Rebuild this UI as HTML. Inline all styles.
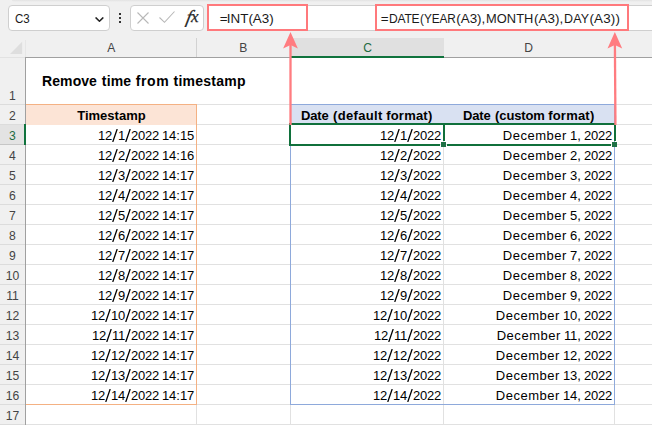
<!DOCTYPE html><html><head><meta charset="utf-8"><title>Excel</title><style>
html,body{margin:0;padding:0;}
body{width:652px;height:425px;position:relative;overflow:hidden;background:#fff;font-family:"Liberation Sans",sans-serif;color:#000;}
.abs{position:absolute;}
.top{left:0;top:0;width:652px;height:58px;background:#f0f0f0;}
.shade{left:12px;top:0;width:640px;height:2px;background:linear-gradient(#e2e2e2,#f0f0f0);border-bottom-left-radius:3px;}
.box{background:#fff;border:1px solid #cfcfcf;border-radius:4px;box-sizing:border-box;}
.fbar{left:207px;top:5px;width:460px;height:26px;background:#fff;border:1px solid #cfcfcf;border-radius:4px 0 0 4px;box-sizing:border-box;}
.red{border:2px solid #ff797c;box-sizing:border-box;background:#fff;}
.ftxt{font-size:13px;line-height:16px;top:10px;white-space:nowrap;color:#1a1a1a;}
.colh{top:38px;height:19px;font-size:13px;line-height:19px;text-align:center;color:#444;}
.colh span{display:inline-block;transform:scaleX(0.93);}
.rowh{left:0;width:25px;transform:scaleX(0.9);font-size:13.5px;text-align:center;color:#444;height:19px;line-height:21px;}
.hl{background:#fff;}
.vl{background:#fff;}
.g{background:#e1e1e1;}
.cell{font-size:13px;white-space:nowrap;height:19px;line-height:19px;}
.r{text-align:right;}
.dg{letter-spacing:-0.23px;}
.sl{display:inline-block;width:6px;height:13px;vertical-align:-2.2px;}
.cl{display:inline-block;width:4px;text-align:center;}
.cm{display:inline-block;width:4px;text-align:center;}
.sp{display:inline-block;width:3px;}
.mw{letter-spacing:0.54px;}
.c{text-align:center;}
.b{font-weight:bold;}
</style></head><body>
<div class="abs top"></div>
<div class="abs shade"></div>
<div class="abs box" style="left:8px;top:5px;width:102px;height:26px;"></div>
<div class="abs" style="left:15.1px;top:10.5px;transform:scaleX(0.92);transform-origin:0 0;font-size:12.5px;line-height:16px;color:#1a1a1a;">C3</div>
<svg class="abs" style="left:94px;top:15px;" width="12" height="9" viewBox="0 0 12 9"><path d="M2.0 2.9 L5.45 6.2 L8.9 2.9" fill="none" stroke="#222" stroke-width="1.5" stroke-linecap="round" stroke-linejoin="round"/></svg>
<div class="abs" style="left:119px;top:13px;width:2px;height:2px;background:#333;"></div>
<div class="abs" style="left:119px;top:17px;width:2px;height:2px;background:#333;"></div>
<div class="abs" style="left:119px;top:21px;width:2px;height:2px;background:#333;"></div>
<div class="abs box" style="left:130px;top:5px;width:74px;height:26px;"></div>
<svg class="abs" style="left:136px;top:11px;" width="14" height="14" viewBox="0 0 14 14"><path d="M1.5 1.5 L12.5 12.5 M12.5 1.5 L1.5 12.5" fill="none" stroke="#b8b8b8" stroke-width="1.1"/></svg>
<svg class="abs" style="left:158px;top:10.4px;" width="18" height="14" viewBox="0 0 18 14"><path d="M1.5 7.5 L6.5 12.3 L16.5 1.5" fill="none" stroke="#b8b8b8" stroke-width="1.1"/></svg>
<div class="abs" style="left:185.6px;top:7px;font-family:'Liberation Serif',serif;font-style:italic;font-size:18.5px;line-height:20px;color:#262626;-webkit-text-stroke:0.25px #262626;transform:skewX(-12deg);transform-origin:50% 60%;">f</div>
<div class="abs" style="left:190.9px;top:7px;font-family:'Liberation Serif',serif;font-style:italic;font-size:17px;line-height:20px;color:#262626;-webkit-text-stroke:0.25px #262626;">x</div>
<div class="abs fbar"></div>
<div class="abs red" style="left:207px;top:4px;width:101px;height:27px;"></div>
<div class="abs red" style="left:375px;top:4px;width:254px;height:27px;"></div>
<div class="abs" style="left:219.78px;top:11px;font:13.4px 'Liberation Sans';line-height:16px;letter-spacing:-0.05px;white-space:nowrap;color:#1a1a1a;">=</div>
<div class="abs" style="left:226.77px;top:11px;font:13.4px 'Liberation Sans';line-height:16px;letter-spacing:0.05px;white-space:nowrap;color:#1a1a1a;">INT</div>
<div class="abs" style="left:248.42px;top:11px;font:13.4px 'Liberation Sans';line-height:16px;letter-spacing:-0.02px;white-space:nowrap;color:#1a1a1a;">(A3)</div>
<div class="abs" style="left:380.78px;top:11px;font:13.4px 'Liberation Sans';line-height:16px;letter-spacing:-0.45px;white-space:nowrap;color:#1a1a1a;">=</div>
<div class="abs" style="left:388.72px;top:11px;font:13.4px 'Liberation Sans';line-height:16px;letter-spacing:-0.23px;white-space:nowrap;color:#1a1a1a;transform:scaleX(0.9);transform-origin:0 0;">DATE</div>
<div class="abs" style="left:420.17px;top:11px;font:13.4px 'Liberation Sans';line-height:16px;letter-spacing:-0.05px;white-space:nowrap;color:#1a1a1a;transform:scaleX(0.88);transform-origin:0 0;">(YEAR</div>
<div class="abs" style="left:456.25px;top:11px;font:13.4px 'Liberation Sans';line-height:16px;letter-spacing:0.00px;white-space:nowrap;color:#1a1a1a;">(A3),</div>
<div class="abs" style="left:485.66px;top:11px;font:13.4px 'Liberation Sans';line-height:16px;letter-spacing:0.07px;white-space:nowrap;color:#1a1a1a;transform:scaleX(0.96);transform-origin:0 0;">MONTH</div>
<div class="abs" style="left:533.95px;top:11px;font:13.4px 'Liberation Sans';line-height:16px;letter-spacing:0.08px;white-space:nowrap;color:#1a1a1a;">(A3),</div>
<div class="abs" style="left:564.05px;top:11px;font:13.4px 'Liberation Sans';line-height:16px;letter-spacing:0.22px;white-space:nowrap;color:#1a1a1a;transform:scaleX(0.93);transform-origin:0 0;">DAY</div>
<div class="abs" style="left:589.45px;top:11px;font:13.4px 'Liberation Sans';line-height:16px;letter-spacing:0.19px;white-space:nowrap;color:#1a1a1a;">(A3))</div>
<div class="abs colh" style="left:26px;width:170px;"><span>A</span></div>
<div class="abs colh" style="left:197px;width:93px;"><span>B</span></div>
<div class="abs colh" style="left:291px;width:153px;background:#e0e0e0;color:#1e6b41;"><span>C</span></div>
<div class="abs colh" style="left:444px;width:170px;"><span>D</span></div>
<div class="abs colh" style="left:615px;width:45px;"><span></span></div>
<div class="abs" style="left:196px;top:38px;width:1px;height:19px;background:#d2d2d2;"></div>
<div class="abs" style="left:290px;top:38px;width:1px;height:19px;background:#d2d2d2;"></div>
<div class="abs" style="left:0;top:57px;width:25px;height:1px;background:#e2e2e2;"></div>
<div class="abs" style="left:25px;top:57px;width:627px;height:1px;background:#a0a0a0;"></div>
<div class="abs" style="left:291px;top:56px;width:153px;height:2px;background:#10733d;"></div>
<svg class="abs" style="left:9px;top:41px;" width="14" height="14" viewBox="0 0 14 14"><path d="M13.2 0.8 L13.2 13 L1 13 Z" fill="#dedede"/></svg>
<div class="abs" style="left:0;top:58px;width:25px;height:367px;background:#f0f0f0;"></div>
<div class="abs" style="left:25px;top:40px;width:1px;height:17px;background:#e6e6e6;"></div>
<div class="abs" style="left:25px;top:57px;width:1px;height:368px;background:#a0a0a0;"></div>
<div class="abs" style="left:0;top:124px;width:25px;height:20px;background:#e3e3e3;"></div>
<div class="abs" style="left:0;top:144px;width:25px;height:1px;background:#c6c6c6;z-index:2;"></div>
<div class="abs" style="left:24px;top:124px;width:2px;height:21px;background:#10733d;z-index:3;"></div>
<div class="abs rowh" style="top:84.8px;">1</div>
<div class="abs rowh" style="top:105px;">2</div>
<div class="abs rowh" style="top:125px;color:#1e6b41;">3</div>
<div class="abs rowh" style="top:145px;">4</div>
<div class="abs rowh" style="top:165px;">5</div>
<div class="abs rowh" style="top:185px;">6</div>
<div class="abs rowh" style="top:205px;">7</div>
<div class="abs rowh" style="top:225px;">8</div>
<div class="abs rowh" style="top:245px;">9</div>
<div class="abs rowh" style="top:265px;">10</div>
<div class="abs rowh" style="top:285px;">11</div>
<div class="abs rowh" style="top:305px;">12</div>
<div class="abs rowh" style="top:325px;">13</div>
<div class="abs rowh" style="top:345px;">14</div>
<div class="abs rowh" style="top:365px;">15</div>
<div class="abs rowh" style="top:385px;">16</div>
<div class="abs rowh" style="top:405px;">17</div>
<div class="abs" style="left:0;top:104px;width:25px;height:1px;background:#dcdcdc;"></div>
<div class="abs" style="left:0;top:124px;width:25px;height:1px;background:#dcdcdc;"></div>
<div class="abs" style="left:0;top:144px;width:25px;height:1px;background:#dcdcdc;"></div>
<div class="abs" style="left:0;top:164px;width:25px;height:1px;background:#dcdcdc;"></div>
<div class="abs" style="left:0;top:184px;width:25px;height:1px;background:#dcdcdc;"></div>
<div class="abs" style="left:0;top:204px;width:25px;height:1px;background:#dcdcdc;"></div>
<div class="abs" style="left:0;top:224px;width:25px;height:1px;background:#dcdcdc;"></div>
<div class="abs" style="left:0;top:244px;width:25px;height:1px;background:#dcdcdc;"></div>
<div class="abs" style="left:0;top:264px;width:25px;height:1px;background:#dcdcdc;"></div>
<div class="abs" style="left:0;top:284px;width:25px;height:1px;background:#dcdcdc;"></div>
<div class="abs" style="left:0;top:304px;width:25px;height:1px;background:#dcdcdc;"></div>
<div class="abs" style="left:0;top:324px;width:25px;height:1px;background:#dcdcdc;"></div>
<div class="abs" style="left:0;top:344px;width:25px;height:1px;background:#dcdcdc;"></div>
<div class="abs" style="left:0;top:364px;width:25px;height:1px;background:#dcdcdc;"></div>
<div class="abs" style="left:0;top:384px;width:25px;height:1px;background:#dcdcdc;"></div>
<div class="abs" style="left:0;top:404px;width:25px;height:1px;background:#dcdcdc;"></div>
<div class="abs" style="left:0;top:424px;width:25px;height:1px;background:#dcdcdc;"></div>
<div class="abs g" style="left:26px;top:104px;width:626px;height:1px;"></div>
<div class="abs g" style="left:26px;top:124px;width:626px;height:1px;"></div>
<div class="abs g" style="left:26px;top:144px;width:626px;height:1px;"></div>
<div class="abs g" style="left:26px;top:164px;width:626px;height:1px;"></div>
<div class="abs g" style="left:26px;top:184px;width:626px;height:1px;"></div>
<div class="abs g" style="left:26px;top:204px;width:626px;height:1px;"></div>
<div class="abs g" style="left:26px;top:224px;width:626px;height:1px;"></div>
<div class="abs g" style="left:26px;top:244px;width:626px;height:1px;"></div>
<div class="abs g" style="left:26px;top:264px;width:626px;height:1px;"></div>
<div class="abs g" style="left:26px;top:284px;width:626px;height:1px;"></div>
<div class="abs g" style="left:26px;top:304px;width:626px;height:1px;"></div>
<div class="abs g" style="left:26px;top:324px;width:626px;height:1px;"></div>
<div class="abs g" style="left:26px;top:344px;width:626px;height:1px;"></div>
<div class="abs g" style="left:26px;top:364px;width:626px;height:1px;"></div>
<div class="abs g" style="left:26px;top:384px;width:626px;height:1px;"></div>
<div class="abs g" style="left:26px;top:404px;width:626px;height:1px;"></div>
<div class="abs g" style="left:26px;top:424px;width:626px;height:1px;"></div>
<div class="abs g" style="left:196px;top:105px;width:1px;height:320px;"></div>
<div class="abs g" style="left:290px;top:105px;width:1px;height:320px;"></div>
<div class="abs g" style="left:443px;top:105px;width:1px;height:320px;"></div>
<div class="abs g" style="left:614px;top:105px;width:1px;height:320px;"></div>
<div class="abs" style="left:42.08px;top:73px;font:bold 14px 'Liberation Sans';line-height:16px;letter-spacing:0.07px;white-space:nowrap;color:#000;">Remove</div>
<div class="abs" style="left:101.78px;top:73px;font:bold 14px 'Liberation Sans';line-height:16px;letter-spacing:0.20px;white-space:nowrap;color:#000;">time</div>
<div class="abs" style="left:135.82px;top:73px;font:bold 14px 'Liberation Sans';line-height:16px;letter-spacing:0.57px;white-space:nowrap;color:#000;">from</div>
<div class="abs" style="left:173.48px;top:73px;font:bold 14px 'Liberation Sans';line-height:16px;letter-spacing:0.26px;white-space:nowrap;color:#000;">timestamp</div>
<div class="abs" style="left:26px;top:105px;width:170px;height:20px;background:#fce4d6;"></div>
<div class="abs" style="left:26px;top:104px;width:171px;height:1px;background:#f4b183;"></div>
<div class="abs" style="left:196px;top:104px;width:1px;height:301px;background:#f4b183;"></div>
<div class="abs" style="left:26px;top:404px;width:171px;height:1px;background:#f4b183;"></div>
<div class="abs" style="left:291px;top:105px;width:323px;height:19px;background:#d9e1f2;"></div>
<div class="abs" style="left:290px;top:104px;width:325px;height:1px;background:#8ea9db;"></div>
<div class="abs" style="left:290px;top:104px;width:1px;height:301px;background:#8ea9db;"></div>
<div class="abs" style="left:614px;top:104px;width:1px;height:301px;background:#8ea9db;"></div>
<div class="abs" style="left:290px;top:404px;width:325px;height:1px;background:#8ea9db;"></div>
<div class="abs" style="left:77.20px;top:106px;font:bold 13px 'Liberation Sans';line-height:19px;letter-spacing:0.01px;white-space:nowrap;color:#000;">Timestamp</div>
<div class="abs" style="left:300.88px;top:106px;font:bold 13px 'Liberation Sans';line-height:19px;letter-spacing:-0.07px;white-space:nowrap;color:#000;">Date</div>
<div class="abs" style="left:333.10px;top:106px;font:bold 13px 'Liberation Sans';line-height:19px;letter-spacing:0.32px;white-space:nowrap;color:#000;">(default</div>
<div class="abs" style="left:386.17px;top:106px;font:bold 13px 'Liberation Sans';line-height:19px;letter-spacing:0.22px;white-space:nowrap;color:#000;">format)</div>
<div class="abs" style="left:462.88px;top:106px;font:bold 13px 'Liberation Sans';line-height:19px;letter-spacing:-0.07px;white-space:nowrap;color:#000;">Date</div>
<div class="abs" style="left:495.10px;top:106px;font:bold 13px 'Liberation Sans';line-height:19px;letter-spacing:-0.12px;white-space:nowrap;color:#000;">(custom</div>
<div class="abs" style="left:548.17px;top:106px;font:bold 13px 'Liberation Sans';line-height:19px;letter-spacing:0.22px;white-space:nowrap;color:#000;">format)</div>
<div class="abs cell r ts" style="left:26px;width:168px;top:126px;"><span class="dg">12</span><svg class="sl" width="6" height="13" viewBox="0 0 6 13"><path d="M0.75 12.95 L5.2 0.05" stroke="#000" stroke-width="1.3" fill="none"/></svg><span class="dg">1</span><svg class="sl" width="6" height="13" viewBox="0 0 6 13"><path d="M0.75 12.95 L5.2 0.05" stroke="#000" stroke-width="1.3" fill="none"/></svg><span class="dg">2022</span><span class="sp"></span><span class="dg">14</span><span class="cl">:</span><span class="dg">15</span></div>
<div class="abs cell r dd" style="left:291px;width:150px;top:126px;"><span class="dg">12</span><svg class="sl" width="6" height="13" viewBox="0 0 6 13"><path d="M0.75 12.95 L5.2 0.05" stroke="#000" stroke-width="1.3" fill="none"/></svg><span class="dg">1</span><svg class="sl" width="6" height="13" viewBox="0 0 6 13"><path d="M0.75 12.95 L5.2 0.05" stroke="#000" stroke-width="1.3" fill="none"/></svg><span class="dg">2022</span></div>
<div class="abs cell r dc" style="left:444px;width:168px;top:126px;"><span class="mw">December</span><span class="sp"></span><span class="dg">1</span><span class="cm">,</span><span class="sp"></span><span class="dg">2022</span></div>
<div class="abs cell r ts" style="left:26px;width:168px;top:146px;"><span class="dg">12</span><svg class="sl" width="6" height="13" viewBox="0 0 6 13"><path d="M0.75 12.95 L5.2 0.05" stroke="#000" stroke-width="1.3" fill="none"/></svg><span class="dg">2</span><svg class="sl" width="6" height="13" viewBox="0 0 6 13"><path d="M0.75 12.95 L5.2 0.05" stroke="#000" stroke-width="1.3" fill="none"/></svg><span class="dg">2022</span><span class="sp"></span><span class="dg">14</span><span class="cl">:</span><span class="dg">16</span></div>
<div class="abs cell r dd" style="left:291px;width:150px;top:146px;"><span class="dg">12</span><svg class="sl" width="6" height="13" viewBox="0 0 6 13"><path d="M0.75 12.95 L5.2 0.05" stroke="#000" stroke-width="1.3" fill="none"/></svg><span class="dg">2</span><svg class="sl" width="6" height="13" viewBox="0 0 6 13"><path d="M0.75 12.95 L5.2 0.05" stroke="#000" stroke-width="1.3" fill="none"/></svg><span class="dg">2022</span></div>
<div class="abs cell r dc" style="left:444px;width:168px;top:146px;"><span class="mw">December</span><span class="sp"></span><span class="dg">2</span><span class="cm">,</span><span class="sp"></span><span class="dg">2022</span></div>
<div class="abs cell r ts" style="left:26px;width:168px;top:166px;"><span class="dg">12</span><svg class="sl" width="6" height="13" viewBox="0 0 6 13"><path d="M0.75 12.95 L5.2 0.05" stroke="#000" stroke-width="1.3" fill="none"/></svg><span class="dg">3</span><svg class="sl" width="6" height="13" viewBox="0 0 6 13"><path d="M0.75 12.95 L5.2 0.05" stroke="#000" stroke-width="1.3" fill="none"/></svg><span class="dg">2022</span><span class="sp"></span><span class="dg">14</span><span class="cl">:</span><span class="dg">17</span></div>
<div class="abs cell r dd" style="left:291px;width:150px;top:166px;"><span class="dg">12</span><svg class="sl" width="6" height="13" viewBox="0 0 6 13"><path d="M0.75 12.95 L5.2 0.05" stroke="#000" stroke-width="1.3" fill="none"/></svg><span class="dg">3</span><svg class="sl" width="6" height="13" viewBox="0 0 6 13"><path d="M0.75 12.95 L5.2 0.05" stroke="#000" stroke-width="1.3" fill="none"/></svg><span class="dg">2022</span></div>
<div class="abs cell r dc" style="left:444px;width:168px;top:166px;"><span class="mw">December</span><span class="sp"></span><span class="dg">3</span><span class="cm">,</span><span class="sp"></span><span class="dg">2022</span></div>
<div class="abs cell r ts" style="left:26px;width:168px;top:186px;"><span class="dg">12</span><svg class="sl" width="6" height="13" viewBox="0 0 6 13"><path d="M0.75 12.95 L5.2 0.05" stroke="#000" stroke-width="1.3" fill="none"/></svg><span class="dg">4</span><svg class="sl" width="6" height="13" viewBox="0 0 6 13"><path d="M0.75 12.95 L5.2 0.05" stroke="#000" stroke-width="1.3" fill="none"/></svg><span class="dg">2022</span><span class="sp"></span><span class="dg">14</span><span class="cl">:</span><span class="dg">17</span></div>
<div class="abs cell r dd" style="left:291px;width:150px;top:186px;"><span class="dg">12</span><svg class="sl" width="6" height="13" viewBox="0 0 6 13"><path d="M0.75 12.95 L5.2 0.05" stroke="#000" stroke-width="1.3" fill="none"/></svg><span class="dg">4</span><svg class="sl" width="6" height="13" viewBox="0 0 6 13"><path d="M0.75 12.95 L5.2 0.05" stroke="#000" stroke-width="1.3" fill="none"/></svg><span class="dg">2022</span></div>
<div class="abs cell r dc" style="left:444px;width:168px;top:186px;"><span class="mw">December</span><span class="sp"></span><span class="dg">4</span><span class="cm">,</span><span class="sp"></span><span class="dg">2022</span></div>
<div class="abs cell r ts" style="left:26px;width:168px;top:206px;"><span class="dg">12</span><svg class="sl" width="6" height="13" viewBox="0 0 6 13"><path d="M0.75 12.95 L5.2 0.05" stroke="#000" stroke-width="1.3" fill="none"/></svg><span class="dg">5</span><svg class="sl" width="6" height="13" viewBox="0 0 6 13"><path d="M0.75 12.95 L5.2 0.05" stroke="#000" stroke-width="1.3" fill="none"/></svg><span class="dg">2022</span><span class="sp"></span><span class="dg">14</span><span class="cl">:</span><span class="dg">17</span></div>
<div class="abs cell r dd" style="left:291px;width:150px;top:206px;"><span class="dg">12</span><svg class="sl" width="6" height="13" viewBox="0 0 6 13"><path d="M0.75 12.95 L5.2 0.05" stroke="#000" stroke-width="1.3" fill="none"/></svg><span class="dg">5</span><svg class="sl" width="6" height="13" viewBox="0 0 6 13"><path d="M0.75 12.95 L5.2 0.05" stroke="#000" stroke-width="1.3" fill="none"/></svg><span class="dg">2022</span></div>
<div class="abs cell r dc" style="left:444px;width:168px;top:206px;"><span class="mw">December</span><span class="sp"></span><span class="dg">5</span><span class="cm">,</span><span class="sp"></span><span class="dg">2022</span></div>
<div class="abs cell r ts" style="left:26px;width:168px;top:226px;"><span class="dg">12</span><svg class="sl" width="6" height="13" viewBox="0 0 6 13"><path d="M0.75 12.95 L5.2 0.05" stroke="#000" stroke-width="1.3" fill="none"/></svg><span class="dg">6</span><svg class="sl" width="6" height="13" viewBox="0 0 6 13"><path d="M0.75 12.95 L5.2 0.05" stroke="#000" stroke-width="1.3" fill="none"/></svg><span class="dg">2022</span><span class="sp"></span><span class="dg">14</span><span class="cl">:</span><span class="dg">17</span></div>
<div class="abs cell r dd" style="left:291px;width:150px;top:226px;"><span class="dg">12</span><svg class="sl" width="6" height="13" viewBox="0 0 6 13"><path d="M0.75 12.95 L5.2 0.05" stroke="#000" stroke-width="1.3" fill="none"/></svg><span class="dg">6</span><svg class="sl" width="6" height="13" viewBox="0 0 6 13"><path d="M0.75 12.95 L5.2 0.05" stroke="#000" stroke-width="1.3" fill="none"/></svg><span class="dg">2022</span></div>
<div class="abs cell r dc" style="left:444px;width:168px;top:226px;"><span class="mw">December</span><span class="sp"></span><span class="dg">6</span><span class="cm">,</span><span class="sp"></span><span class="dg">2022</span></div>
<div class="abs cell r ts" style="left:26px;width:168px;top:246px;"><span class="dg">12</span><svg class="sl" width="6" height="13" viewBox="0 0 6 13"><path d="M0.75 12.95 L5.2 0.05" stroke="#000" stroke-width="1.3" fill="none"/></svg><span class="dg">7</span><svg class="sl" width="6" height="13" viewBox="0 0 6 13"><path d="M0.75 12.95 L5.2 0.05" stroke="#000" stroke-width="1.3" fill="none"/></svg><span class="dg">2022</span><span class="sp"></span><span class="dg">14</span><span class="cl">:</span><span class="dg">17</span></div>
<div class="abs cell r dd" style="left:291px;width:150px;top:246px;"><span class="dg">12</span><svg class="sl" width="6" height="13" viewBox="0 0 6 13"><path d="M0.75 12.95 L5.2 0.05" stroke="#000" stroke-width="1.3" fill="none"/></svg><span class="dg">7</span><svg class="sl" width="6" height="13" viewBox="0 0 6 13"><path d="M0.75 12.95 L5.2 0.05" stroke="#000" stroke-width="1.3" fill="none"/></svg><span class="dg">2022</span></div>
<div class="abs cell r dc" style="left:444px;width:168px;top:246px;"><span class="mw">December</span><span class="sp"></span><span class="dg">7</span><span class="cm">,</span><span class="sp"></span><span class="dg">2022</span></div>
<div class="abs cell r ts" style="left:26px;width:168px;top:266px;"><span class="dg">12</span><svg class="sl" width="6" height="13" viewBox="0 0 6 13"><path d="M0.75 12.95 L5.2 0.05" stroke="#000" stroke-width="1.3" fill="none"/></svg><span class="dg">8</span><svg class="sl" width="6" height="13" viewBox="0 0 6 13"><path d="M0.75 12.95 L5.2 0.05" stroke="#000" stroke-width="1.3" fill="none"/></svg><span class="dg">2022</span><span class="sp"></span><span class="dg">14</span><span class="cl">:</span><span class="dg">17</span></div>
<div class="abs cell r dd" style="left:291px;width:150px;top:266px;"><span class="dg">12</span><svg class="sl" width="6" height="13" viewBox="0 0 6 13"><path d="M0.75 12.95 L5.2 0.05" stroke="#000" stroke-width="1.3" fill="none"/></svg><span class="dg">8</span><svg class="sl" width="6" height="13" viewBox="0 0 6 13"><path d="M0.75 12.95 L5.2 0.05" stroke="#000" stroke-width="1.3" fill="none"/></svg><span class="dg">2022</span></div>
<div class="abs cell r dc" style="left:444px;width:168px;top:266px;"><span class="mw">December</span><span class="sp"></span><span class="dg">8</span><span class="cm">,</span><span class="sp"></span><span class="dg">2022</span></div>
<div class="abs cell r ts" style="left:26px;width:168px;top:286px;"><span class="dg">12</span><svg class="sl" width="6" height="13" viewBox="0 0 6 13"><path d="M0.75 12.95 L5.2 0.05" stroke="#000" stroke-width="1.3" fill="none"/></svg><span class="dg">9</span><svg class="sl" width="6" height="13" viewBox="0 0 6 13"><path d="M0.75 12.95 L5.2 0.05" stroke="#000" stroke-width="1.3" fill="none"/></svg><span class="dg">2022</span><span class="sp"></span><span class="dg">14</span><span class="cl">:</span><span class="dg">17</span></div>
<div class="abs cell r dd" style="left:291px;width:150px;top:286px;"><span class="dg">12</span><svg class="sl" width="6" height="13" viewBox="0 0 6 13"><path d="M0.75 12.95 L5.2 0.05" stroke="#000" stroke-width="1.3" fill="none"/></svg><span class="dg">9</span><svg class="sl" width="6" height="13" viewBox="0 0 6 13"><path d="M0.75 12.95 L5.2 0.05" stroke="#000" stroke-width="1.3" fill="none"/></svg><span class="dg">2022</span></div>
<div class="abs cell r dc" style="left:444px;width:168px;top:286px;"><span class="mw">December</span><span class="sp"></span><span class="dg">9</span><span class="cm">,</span><span class="sp"></span><span class="dg">2022</span></div>
<div class="abs cell r ts" style="left:26px;width:168px;top:306px;"><span class="dg">12</span><svg class="sl" width="6" height="13" viewBox="0 0 6 13"><path d="M0.75 12.95 L5.2 0.05" stroke="#000" stroke-width="1.3" fill="none"/></svg><span class="dg">10</span><svg class="sl" width="6" height="13" viewBox="0 0 6 13"><path d="M0.75 12.95 L5.2 0.05" stroke="#000" stroke-width="1.3" fill="none"/></svg><span class="dg">2022</span><span class="sp"></span><span class="dg">14</span><span class="cl">:</span><span class="dg">17</span></div>
<div class="abs cell r dd" style="left:291px;width:150px;top:306px;"><span class="dg">12</span><svg class="sl" width="6" height="13" viewBox="0 0 6 13"><path d="M0.75 12.95 L5.2 0.05" stroke="#000" stroke-width="1.3" fill="none"/></svg><span class="dg">10</span><svg class="sl" width="6" height="13" viewBox="0 0 6 13"><path d="M0.75 12.95 L5.2 0.05" stroke="#000" stroke-width="1.3" fill="none"/></svg><span class="dg">2022</span></div>
<div class="abs cell r dc" style="left:444px;width:168px;top:306px;"><span class="mw">December</span><span class="sp"></span><span class="dg">10</span><span class="cm">,</span><span class="sp"></span><span class="dg">2022</span></div>
<div class="abs cell r ts" style="left:26px;width:168px;top:326px;"><span class="dg">12</span><svg class="sl" width="6" height="13" viewBox="0 0 6 13"><path d="M0.75 12.95 L5.2 0.05" stroke="#000" stroke-width="1.3" fill="none"/></svg><span class="dg">11</span><svg class="sl" width="6" height="13" viewBox="0 0 6 13"><path d="M0.75 12.95 L5.2 0.05" stroke="#000" stroke-width="1.3" fill="none"/></svg><span class="dg">2022</span><span class="sp"></span><span class="dg">14</span><span class="cl">:</span><span class="dg">17</span></div>
<div class="abs cell r dd" style="left:291px;width:150px;top:326px;"><span class="dg">12</span><svg class="sl" width="6" height="13" viewBox="0 0 6 13"><path d="M0.75 12.95 L5.2 0.05" stroke="#000" stroke-width="1.3" fill="none"/></svg><span class="dg">11</span><svg class="sl" width="6" height="13" viewBox="0 0 6 13"><path d="M0.75 12.95 L5.2 0.05" stroke="#000" stroke-width="1.3" fill="none"/></svg><span class="dg">2022</span></div>
<div class="abs cell r dc" style="left:444px;width:168px;top:326px;"><span class="mw">December</span><span class="sp"></span><span class="dg">11</span><span class="cm">,</span><span class="sp"></span><span class="dg">2022</span></div>
<div class="abs cell r ts" style="left:26px;width:168px;top:346px;"><span class="dg">12</span><svg class="sl" width="6" height="13" viewBox="0 0 6 13"><path d="M0.75 12.95 L5.2 0.05" stroke="#000" stroke-width="1.3" fill="none"/></svg><span class="dg">12</span><svg class="sl" width="6" height="13" viewBox="0 0 6 13"><path d="M0.75 12.95 L5.2 0.05" stroke="#000" stroke-width="1.3" fill="none"/></svg><span class="dg">2022</span><span class="sp"></span><span class="dg">14</span><span class="cl">:</span><span class="dg">17</span></div>
<div class="abs cell r dd" style="left:291px;width:150px;top:346px;"><span class="dg">12</span><svg class="sl" width="6" height="13" viewBox="0 0 6 13"><path d="M0.75 12.95 L5.2 0.05" stroke="#000" stroke-width="1.3" fill="none"/></svg><span class="dg">12</span><svg class="sl" width="6" height="13" viewBox="0 0 6 13"><path d="M0.75 12.95 L5.2 0.05" stroke="#000" stroke-width="1.3" fill="none"/></svg><span class="dg">2022</span></div>
<div class="abs cell r dc" style="left:444px;width:168px;top:346px;"><span class="mw">December</span><span class="sp"></span><span class="dg">12</span><span class="cm">,</span><span class="sp"></span><span class="dg">2022</span></div>
<div class="abs cell r ts" style="left:26px;width:168px;top:366px;"><span class="dg">12</span><svg class="sl" width="6" height="13" viewBox="0 0 6 13"><path d="M0.75 12.95 L5.2 0.05" stroke="#000" stroke-width="1.3" fill="none"/></svg><span class="dg">13</span><svg class="sl" width="6" height="13" viewBox="0 0 6 13"><path d="M0.75 12.95 L5.2 0.05" stroke="#000" stroke-width="1.3" fill="none"/></svg><span class="dg">2022</span><span class="sp"></span><span class="dg">14</span><span class="cl">:</span><span class="dg">17</span></div>
<div class="abs cell r dd" style="left:291px;width:150px;top:366px;"><span class="dg">12</span><svg class="sl" width="6" height="13" viewBox="0 0 6 13"><path d="M0.75 12.95 L5.2 0.05" stroke="#000" stroke-width="1.3" fill="none"/></svg><span class="dg">13</span><svg class="sl" width="6" height="13" viewBox="0 0 6 13"><path d="M0.75 12.95 L5.2 0.05" stroke="#000" stroke-width="1.3" fill="none"/></svg><span class="dg">2022</span></div>
<div class="abs cell r dc" style="left:444px;width:168px;top:366px;"><span class="mw">December</span><span class="sp"></span><span class="dg">13</span><span class="cm">,</span><span class="sp"></span><span class="dg">2022</span></div>
<div class="abs cell r ts" style="left:26px;width:168px;top:386px;"><span class="dg">12</span><svg class="sl" width="6" height="13" viewBox="0 0 6 13"><path d="M0.75 12.95 L5.2 0.05" stroke="#000" stroke-width="1.3" fill="none"/></svg><span class="dg">14</span><svg class="sl" width="6" height="13" viewBox="0 0 6 13"><path d="M0.75 12.95 L5.2 0.05" stroke="#000" stroke-width="1.3" fill="none"/></svg><span class="dg">2022</span><span class="sp"></span><span class="dg">14</span><span class="cl">:</span><span class="dg">17</span></div>
<div class="abs cell r dd" style="left:291px;width:150px;top:386px;"><span class="dg">12</span><svg class="sl" width="6" height="13" viewBox="0 0 6 13"><path d="M0.75 12.95 L5.2 0.05" stroke="#000" stroke-width="1.3" fill="none"/></svg><span class="dg">14</span><svg class="sl" width="6" height="13" viewBox="0 0 6 13"><path d="M0.75 12.95 L5.2 0.05" stroke="#000" stroke-width="1.3" fill="none"/></svg><span class="dg">2022</span></div>
<div class="abs cell r dc" style="left:444px;width:168px;top:386px;"><span class="mw">December</span><span class="sp"></span><span class="dg">14</span><span class="cm">,</span><span class="sp"></span><span class="dg">2022</span></div>
<div class="abs" style="left:289px;top:123px;width:327px;height:2px;background:#10703b;"></div>
<div class="abs" style="left:289px;top:123px;width:2px;height:23px;background:#10703b;"></div>
<div class="abs" style="left:443px;top:123px;width:2px;height:18px;background:#10703b;"></div>
<div class="abs" style="left:614px;top:123px;width:2px;height:18px;background:#10703b;"></div>
<div class="abs" style="left:289px;top:144px;width:151px;height:2px;background:#10703b;"></div>
<div class="abs" style="left:447px;top:144px;width:164px;height:2px;background:#10703b;"></div>
<div class="abs" style="left:441px;top:142px;width:5px;height:5px;background:#1e7145;"></div>
<div class="abs" style="left:612px;top:142px;width:5px;height:5px;background:#1e7145;"></div>
<svg class="abs" style="left:0;top:0;" width="652" height="425" viewBox="0 0 652 425"><g fill="#ff7c80"><rect x="289.35" y="44" width="2.3" height="81"/><path d="M290.5 32 L297.9 48.4 L290.5 45 L283.1 48.4 Z"/><path d="M613.75 44 L616.05 44 L616.6 125 L614.3 125 Z"/><path d="M614.85 32 L622.2 48.4 L614.85 45 L607.5 48.4 Z"/></g></svg>
</body></html>
